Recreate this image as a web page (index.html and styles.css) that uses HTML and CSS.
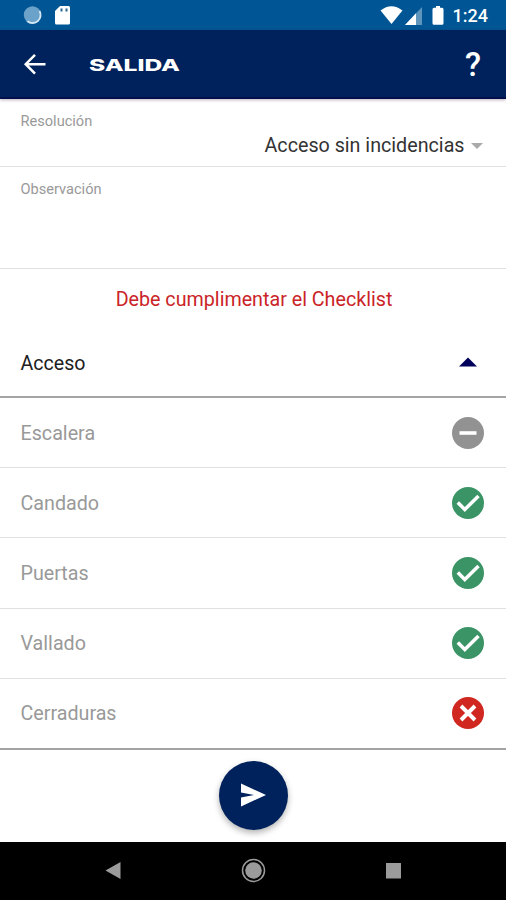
FILE: index.html
```html
<!DOCTYPE html>
<html lang="es">
<head>
<meta charset="utf-8">
<title>Salida</title>
<link rel="stylesheet" href="styles.css">
</head>
<body>
<div class="status">
  <svg width="80" height="30" viewBox="0 0 80 30"><circle cx="32.500" cy="15" r="8.700" fill="#6ba2c9"/><path d="M39.500 11A8 8 0 0 1 27.500 21.200" fill="none" stroke="#d5e8f3" stroke-width="1.800"/><path d="M60 6h8.500q1.500 0 1.500 1.500v15.500q0 1.500-1.500 1.500h-12q-1.500 0-1.500-1.500V11z" fill="#fff"/><path d="M61.500 8.500v3M66.500 8.500v3" stroke="#286692" stroke-width="2"/></svg>
  <div class="status-right">
    <svg width="66" height="30" viewBox="380 0 66 30" fill="#fff"><path d="M380.500 10.500Q391.500 2 402.500 10.500L391.500 24z"/><path d="M422 7v18h-17z" fill="#5d95bd"/><path d="M416 13.300V25h-11z"/><path d="M436 6h4v1.700h2q1.500 0 1.500 1.500v14q0 1.500-1.500 1.500h-8q-1.500 0-1.500-1.500v-14q0-1.500 1.500-1.500h2z"/></svg>
    <span class="clock">1:24</span>
  </div>
</div>
<header class="bar">
  <svg class="back" width="24" height="24" viewBox="0 0 24 24" fill="none" stroke="#fff" stroke-width="2.500"><path d="M22.500 12.200H3M12 2.800L2.700 12.200 12 21.600"/></svg>
  <svg class="title" width="94" height="20" viewBox="0 0 94 20"><text x="1" y="16.500" textLength="91" lengthAdjust="spacingAndGlyphs">SALIDA</text></svg>
  <span class="help">?</span>
</header>
<main>
  <section class="field resolution">
    <label class="small">Resolución</label>
    <div class="select"><span class="value">Acceso sin incidencias</span><svg width="12" height="7" viewBox="0 0 12 7"><path d="M0 0h12L6 6z" fill="#aaa"/></svg></div>
  </section>
  <section class="field observation"><label class="small wide">Observación</label></section>
  <p class="warning">Debe cumplimentar el Checklist</p>
  <div class="group"><span>Acceso</span><svg width="32" height="10" viewBox="0 0 32 10"><path d="M7 9.500L16 .5l9 9z" fill="#00005c"/></svg></div>
  <ul class="list">
    <li><span>Escalera</span><svg class="mark" viewBox="0 0 32 32"><circle cx="16" cy="16" r="16" fill="#929292"/><path d="M7.500 16h17" stroke="#fff" stroke-width="3.600"/></svg></li>
    <li><span>Candado</span><svg class="mark" viewBox="0 0 32 32"><circle cx="16" cy="16" r="16" fill="#3b9465"/><path d="M5.800 15.500L12.800 22.500 26.500 9" fill="none" stroke="#fff" stroke-width="3.500"/></svg></li>
    <li><span>Puertas</span><svg class="mark" viewBox="0 0 32 32"><circle cx="16" cy="16" r="16" fill="#3b9465"/><path d="M5.800 15.500L12.800 22.500 26.500 9" fill="none" stroke="#fff" stroke-width="3.500"/></svg></li>
    <li><span>Vallado</span><svg class="mark" viewBox="0 0 32 32"><circle cx="16" cy="16" r="16" fill="#3b9465"/><path d="M5.800 15.500L12.800 22.500 26.500 9" fill="none" stroke="#fff" stroke-width="3.500"/></svg></li>
    <li><span>Cerraduras</span><svg class="mark" viewBox="0 0 32 32"><circle cx="16" cy="16" r="16" fill="#d02820"/><path d="M9 9l14 14M23 9L9 23" stroke="#fff" stroke-width="3.900"/></svg></li>
  </ul>
  <div class="actions"><button class="send" aria-label="Enviar"><svg width="26" height="26" viewBox="0 0 26 26"><path d="M1 1.500L26 13 1 24.500V15.500L14 13 1 10.500z" fill="#fff"/></svg></button></div>
</main>
<nav class="nav">
  <svg width="506" height="58" viewBox="0 0 506 58" fill="#9b9b9b"><path d="M105.500 28.500l15-8.500v17z"/><circle cx="253.500" cy="28.500" r="8.300"/><circle cx="253.500" cy="28.500" r="11" fill="none" stroke="#9b9b9b" stroke-width="1.500"/><path d="M386 21h15v15.500h-15z"/></svg>
</nav>
</body>
</html>
```
FILE: styles.css
```css
* { box-sizing: border-box; }
body { margin: 0; width: 506px; height: 900px; display: flex; flex-direction: column; background: #fff; font-family: Roboto, sans-serif; overflow: hidden; }
svg { display: block; flex: none; }
.status { height: 30px; background: #005694; display: flex; justify-content: space-between; }
.status-right { display: flex; align-items: center; padding-right: 18px; }
.clock { color: #fff; font-size: 18px; font-weight: 500; line-height: 30px; width: 42px; text-align: right; padding-top: 2px; }
.bar { height: 69px; background: #00225c; border-bottom: 2px solid #00104a; display: flex; align-items: center; padding: 0 25px 0 23px; box-shadow: 0 1px 3px rgba(60, 30, 70, .35); }
.title { margin-left: 41px; }
.title text { font: 800 16.5px Inter, sans-serif; fill: #fff; }
.help { margin-left: auto; color: #fff; font-size: 33px; font-weight: 500; line-height: 40px; padding-top: 2px; }
main { height: 743px; }
.field { padding: 0 20.500px; border-bottom: 1px solid #e0e0e0; }
.small { display: block; font-size: 14.600px; line-height: 20px; color: #999; }
.resolution { height: 68px; padding-top: 12px; }
.observation { height: 102px; padding-top: 12px; }
.select { display: flex; justify-content: flex-end; align-items: center; gap: 6px; padding-right: 3px; margin-top: 3px; font-size: 19.700px; line-height: 24px; color: #333; }
.warning { margin: 0; height: 60px; text-align: center; font-size: 19.700px; line-height: 60px; color: #ca2427; padding: 1px 0 0 2px; }
.group { height: 69px; border-bottom: 2px solid #a5a5a7; display: flex; align-items: center; justify-content: space-between; padding: 1px 22px 0 20.500px; font-size: 19.600px; color: #202020; }
.group svg { margin-bottom: 2px; }
.list { list-style: none; margin: 0; padding: 0; border-bottom: 2px solid #a3a3a3; }
.list li { height: 70.200px; display: flex; align-items: center; justify-content: space-between; padding: 1px 22px 0 20.500px; font-size: 19.700px; color: #999; border-bottom: 1px solid #e0e0e0; }
.list li:last-child { height: 69px; border-bottom: 0; }
.mark { width: 32px; height: 32px; margin-bottom: 1px; }
.actions { display: flex; justify-content: center; padding: 11px 0 0 1px; }
.send { width: 69px; height: 69px; border: 0; border-radius: 50%; background: #00225c; display: flex; align-items: center; justify-content: center; padding: 0 2px 0 0; box-shadow: 0 3px 6px rgba(0, 0, 0, .3); }
.nav { height: 58px; background: #000; }
```
